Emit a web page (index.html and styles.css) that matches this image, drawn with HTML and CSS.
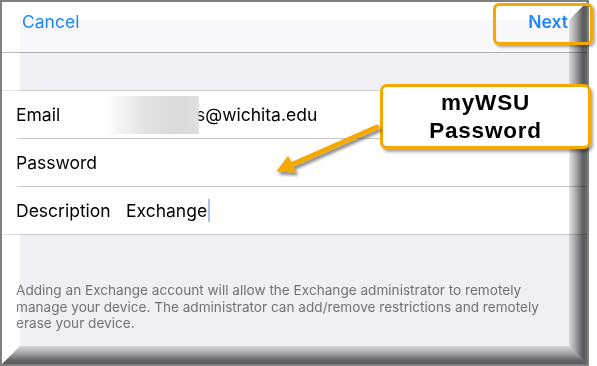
FILE: index.html
```html
<!DOCTYPE html>
<html>
<head>
<meta charset="utf-8">
<link rel="stylesheet" href="styles.css">
</head>
<body>
<div class="frame">
  <header class="nav">
    <span class="nav-btn">Cancel</span>
    <span class="nav-btn strong">Next</span>
  </header>
  <div class="spacer"></div>
  <div class="group">
    <div class="row">
      <div class="row-inner">
        <span class="label">Email</span>
        <span class="value"><span class="redact"></span><span class="email-tail">s@wichita.edu</span></span>
      </div>
    </div>
    <div class="row">
      <div class="row-inner">
        <span class="label">Password</span>
        <span class="value"></span>
      </div>
    </div>
    <div class="row last">
      <div class="row-inner">
        <span class="label">Description</span>
        <span class="value">Exchange<span class="caret"></span></span>
      </div>
    </div>
  </div>
  <div class="footer">
    <p>Adding an Exchange account will allow the Exchange administrator to remotely<br>manage your device. The administrator can add/remove restrictions and remotely<br>erase your device.</p>
  </div>

  <div class="bevel bevel-top"></div>
  <div class="bevel bevel-left"></div>
  <div class="bevel bevel-right"></div>
  <div class="bevel bevel-bottom"></div>

  <div class="next-highlight"></div>
  <div class="callout">myWSU<br>Password</div>
  <svg class="arrow" width="597" height="366" viewBox="0 0 597 366">
    <defs>
      <filter id="sh" x="-20%" y="-20%" width="140%" height="140%">
        <feDropShadow dx="2" dy="3" stdDeviation="1.5" flood-color="#000" flood-opacity="0.45"/>
      </filter>
    </defs>
    <g filter="url(#sh)" fill="#f5a800" stroke="#f5a800">
      <line x1="377" y1="127" x2="292" y2="164.5" stroke-width="5" stroke-linecap="round"/>
      <polygon points="277,171 288,156.5 295.5,172" stroke-width="1" stroke-linejoin="round"/>
    </g>
  </svg>
</div>
</body>
</html>
```

FILE: styles.css
```css
html, body {
  margin: 0;
  padding: 0;
  background: #ffffff;
}

body {
  width: 597px;
  height: 366px;
  overflow: hidden;
  font-family: "Inter", "Liberation Sans", sans-serif;
}

.frame {
  position: relative;
  box-sizing: border-box;
  width: 589px;
  height: 366px;
  border: 2px solid #7f7f7f;
  display: flex;
  flex-direction: column;
  background: #efeff4;
  isolation: isolate;
}

.nav {
  flex: none;
  background: #f8f8fa;
  border-bottom: 1px solid #adadb0;
  display: flex;
  justify-content: space-between;
  align-items: flex-start;
  padding: 9px 19px 0 20px;
  box-sizing: content-box;
  height: 41px;
}

.nav-btn {
  font-size: 17.5px;
  line-height: 22px;
  color: #1c84f7;
}

.nav-btn.strong {
  font-weight: 600;
}

.spacer {
  height: 37px;
  flex: none;
}

.group {
  flex: none;
  background: #ffffff;
  border-top: 1px solid #cfcfd3;
}

.row {
  padding-left: 14px;
}

.row-inner {
  height: 47px;
  display: flex;
  align-items: center;
  border-bottom: 1px solid #c8c7cc;
  font-size: 17.5px;
  color: #000000;
}

.row.last {
  padding-left: 0;
}

.row.last .row-inner {
  padding-left: 14px;
}

.label {
  width: 110px;
  flex: none;
}

.value {
  display: flex;
  align-items: center;
  position: relative;
}

.redact {
  position: relative;
  z-index: 1;
  width: 94px;
  height: 38px;
  margin-left: -21px;
  background: linear-gradient(to right, #ffffff 0%, #f3f3f3 18%, #e4e4e4 40%, #dcdcdc 65%, #dadada 85%, rgba(220, 220, 220, 0.85) 100%);
}

.email-tail {
  margin-left: -3px;
}

.caret {
  display: inline-block;
  width: 1.5px;
  height: 23px;
  margin-left: 1px;
  background: #a9c0f2;
}

.footer {
  flex: 1;
  padding: 47px 14px 0 14px;
}

.footer p {
  margin: 0;
  font-size: 13.6px;
  line-height: 16.7px;
  color: #717176;
  white-space: nowrap;
}

.bevel {
  position: absolute;
  inset: 0;
  pointer-events: none;
}

.bevel-top {
  clip-path: polygon(0 0, 100% 0, calc(100% - 18px) 18px, 18px 18px);
  background: rgb(18, 18, 18);
  mix-blend-mode: color-dodge;
}

.bevel-left {
  clip-path: polygon(0 0, 18px 18px, 18px calc(100% - 18px), 0 100%);
  background: rgb(24, 24, 24);
  mix-blend-mode: color-dodge;
}

.bevel-right {
  clip-path: polygon(100% 0, 100% 100%, calc(100% - 18px) calc(100% - 18px), calc(100% - 18px) 18px);
  background: linear-gradient(to right, rgba(255,255,255,0) calc(100% - 19px), #e6e6e6 calc(100% - 18px), #a8a8a8 calc(100% - 11px), #5e5e5e calc(100% - 4px), #6a6a6a 100%);
  mix-blend-mode: multiply;
}

.bevel-bottom {
  clip-path: polygon(0 100%, 18px calc(100% - 18px), calc(100% - 18px) calc(100% - 18px), 100% 100%);
  background: linear-gradient(to bottom, rgba(255,255,255,0) calc(100% - 19px), #e4e4e4 calc(100% - 18px), #b4b4b4 calc(100% - 11px), #6e6e6e calc(100% - 4px), #5c5c5c 100%);
  mix-blend-mode: multiply;
}

.next-highlight {
  position: absolute;
  left: 491px;
  top: 1px;
  width: 94px;
  height: 36px;
  border: 3px solid #f5a800;
  border-radius: 6px;
  box-shadow: 2px 2px 3px rgba(0, 0, 0, 0.35);
}

.callout {
  position: absolute;
  left: 378px;
  top: 82px;
  width: 205px;
  height: 59px;
  border: 3px solid #f5a800;
  border-radius: 7px;
  background: #ffffff;
  box-shadow: 2px 3px 3px rgba(0, 0, 0, 0.35);
  font-family: "Liberation Sans", Arial, sans-serif;
  font-weight: bold;
  font-size: 22.5px;
  letter-spacing: 0.8px;
  line-height: 28px;
  text-align: center;
  color: #000000;
  display: flex;
  align-items: center;
  justify-content: center;
}

.arrow {
  position: absolute;
  left: -2px;
  top: -2px;
  pointer-events: none;
  overflow: visible;
}
```
